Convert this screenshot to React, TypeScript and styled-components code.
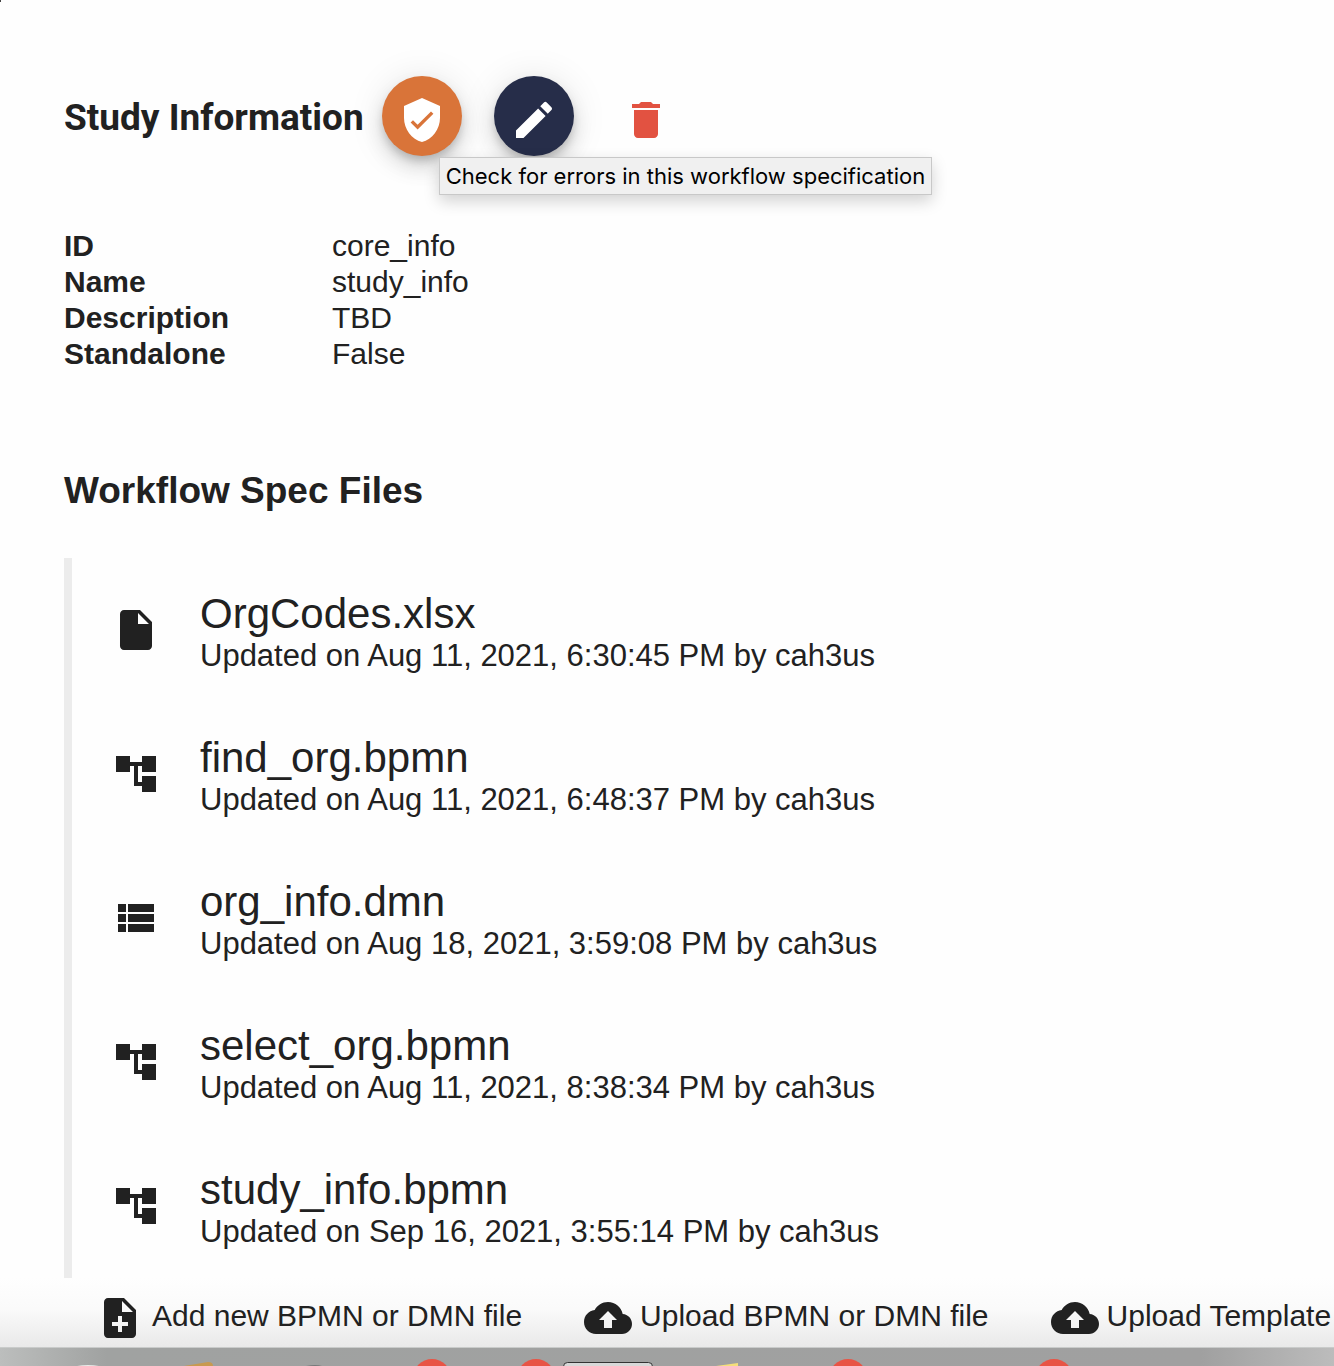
import React from "react";
import styled, { createGlobalStyle } from "styled-components";

const GlobalStyle = createGlobalStyle`
  *, *::before, *::after { box-sizing: border-box; }
  body {
    margin: 0;
    background: #fefefe;
    color: #212121;
    font-family: "Liberation Sans", Arial, sans-serif;
    font-size: 30px;
    line-height: 36px;
  }
`;

const Page = styled.div`
  position: relative;
  display: flex;
  flex-direction: column;
  min-height: 100vh;
  overflow: hidden;

  &::before {
    content: "";
    position: absolute;
    top: 0;
    left: 0;
    width: 1px;
    height: 2px;
    background: #444;
  }
`;

const Main = styled.main`
  flex: 1;
  padding: 76px 64px 0;
`;

const TitleRow = styled.header`
  display: flex;
  align-items: center;
  gap: 18px;
`;

const Title = styled.h1`
  margin: 0;
  padding-top: 4px;
  font-family: Roboto, "Liberation Sans", sans-serif;
  font-size: 37px;
  line-height: 48px;
  font-weight: 700;
  white-space: nowrap;
`;

const Actions = styled.div`
  display: flex;
  gap: 32px;
`;

const RoundButton = styled.button<{ $bg?: string; $color?: string }>`
  position: relative;
  display: flex;
  align-items: center;
  justify-content: center;
  width: 80px;
  height: 80px;
  padding: 7px 0 0;
  border: 0;
  border-radius: 50%;
  background: ${(p) => p.$bg ?? "transparent"};
  color: ${(p) => p.$color ?? "#fff"};
  box-shadow: ${(p) =>
    p.$bg
      ? "0 6px 10px -2px rgba(0,0,0,.2), 0 12px 20px rgba(0,0,0,.12), 0 2px 36px rgba(0,0,0,.1)"
      : "none"};
`;

const Tooltip = styled.span`
  position: absolute;
  z-index: 2;
  top: 81px;
  left: 57px;
  padding: 0 6px;
  border: 1px solid #c8c8c8;
  background: #f0f0f0;
  box-shadow: 0 6px 16px rgba(0, 0, 0, 0.18);
  color: #000;
  font-family: Inter, sans-serif;
  font-size: 22px;
  line-height: 36px;
  white-space: nowrap;
`;

const Glyph = styled.svg`
  flex: none;
  width: 48px;
  height: 48px;
  fill: currentColor;
`;

const Details = styled.dl`
  display: grid;
  grid-template-columns: 236px 1fr;
  column-gap: 32px;
  margin: 72px 0 0;
`;

const Term = styled.dt`
  font-weight: 700;
`;

const Value = styled.dd`
  margin: 0;
`;

const SectionTitle = styled.h2`
  margin: 95px 0 43px;
  font-size: 37px;
  line-height: 48px;
  font-weight: 700;
`;

const FileList = styled.ul`
  margin: 0;
  padding: 0;
  border-left: 8px solid #ececec;
  list-style: none;
`;

const FileRow = styled.li`
  display: flex;
  align-items: center;
  gap: 40px;
  height: 144px;
  padding-left: 40px;
`;

const FileText = styled.div`
  padding-top: 4px;
`;

const FileName = styled.div`
  font-size: 42px;
  line-height: 48px;
`;

const FileMeta = styled.div`
  font-size: 31px;
`;

const Toolbar = styled.footer`
  display: flex;
  height: 69px;
  padding: 0 65px;
  background: linear-gradient(#fefefe, #fafafa 45%, #e9e9e9);
`;

const ToolButton = styled.button`
  display: flex;
  flex: none;
  align-items: center;
  gap: 8px;
  padding: 10px 31px 0;
  border: 0;
  background: none;
  color: inherit;
  font: inherit;
  white-space: nowrap;
`;

const ToolLabel = styled.span`
  padding-bottom: 4px;
`;

const Dock = styled.div`
  height: 19px;
  overflow: hidden;
  border-top: 1px solid #c9cbca;
  background: linear-gradient(90deg, #bcbebd, #a0a2a1 8%, #a0a0a0 90%, #bcbcbc);
`;

const DockArt = styled.svg`
  display: block;
`;

const icons = {
  shield:
    "M12 1 3 5v6c0 5.55 3.84 10.74 9 12 5.16-1.26 9-6.45 9-12V5l-9-4zm-2.2 15.8-3.5-3.5 1.2-1.2 2.3 2.3 6.7-6.7 1.2 1.2-7.9 7.9z",
  edit: "M3 17.25V21h3.75L17.81 9.94l-3.75-3.75L3 17.25zM20.71 7.04c.39-.39.39-1.02 0-1.41l-2.34-2.34a.996.996 0 0 0-1.41 0l-1.83 1.83 3.75 3.75 1.83-1.83z",
  trash:
    "M6 19c0 1.1.9 2 2 2h8c1.1 0 2-.9 2-2V7H6v12zM19 4h-3.5l-1-1h-5l-1 1H5v2h14V4z",
  file: "M6 2c-1.1 0-1.99.9-1.99 2L4 20c0 1.1.89 2 1.99 2H18c1.1 0 2-.9 2-2V8l-6-6H6zm7 7V3.5L18.5 9H13z",
  tree: "M22 11V3h-7v3H9V3H2v8h7V8h2v10h4v3h7v-8h-7v3h-2V8h2v3z",
  list: "M3 14h4v-4H3v4zm0 5h4v-4H3v4zM3 9h4V5H3v4zm5 5h13v-4H8v4zm0 5h13v-4H8v4zM8 5v4h13V5H8z",
  add: "M14 2H6c-1.1 0-1.99.9-1.99 2L4 20c0 1.1.89 2 1.99 2H18c1.1 0 2-.9 2-2V8l-6-6zm2 14h-3v3h-2v-3H8v-2h3v-3h2v3h3v2zm-3-7V3.5L18.5 9H13z",
  upload:
    "M19.35 10.04C18.67 6.59 15.64 4 12 4 9.11 4 6.6 5.64 5.35 8.04 2.34 8.36 0 10.91 0 14c0 3.31 2.69 6 6 6h13c2.76 0 5-2.24 5-5 0-2.64-2.05-4.78-4.65-4.96zM14 13v4h-4v-4H7.5L12 8.5l4.5 4.5H14z",
};

type IconName = keyof typeof icons;

const Icon = ({ name }: { name: IconName }) => (
  <Glyph viewBox="0 0 24 24" aria-hidden="true">
    <path d={icons[name]} />
  </Glyph>
);

const details = [
  ["ID", "core_info"],
  ["Name", "study_info"],
  ["Description", "TBD"],
  ["Standalone", "False"],
];

const files: { icon: IconName; name: string; updated: string }[] = [
  { icon: "file", name: "OrgCodes.xlsx", updated: "Aug 11, 2021, 6:30:45 PM" },
  { icon: "tree", name: "find_org.bpmn", updated: "Aug 11, 2021, 6:48:37 PM" },
  { icon: "list", name: "org_info.dmn", updated: "Aug 18, 2021, 3:59:08 PM" },
  { icon: "tree", name: "select_org.bpmn", updated: "Aug 11, 2021, 8:38:34 PM" },
  { icon: "tree", name: "study_info.bpmn", updated: "Sep 16, 2021, 3:55:14 PM" },
];

const tools: { icon: IconName; label: string }[] = [
  { icon: "add", label: "Add new BPMN or DMN file" },
  { icon: "upload", label: "Upload BPMN or DMN file" },
  { icon: "upload", label: "Upload Template" },
];

const badges = [432, 536, 848, 1054];

export default function App() {
  return (
    <>
      <GlobalStyle />
      <Page>
        <Main>
          <TitleRow>
            <Title>Study Information</Title>
            <Actions>
              <RoundButton $bg="#d97439" aria-label="Validate" aria-describedby="validate-tip">
                <Icon name="shield" />
                <Tooltip id="validate-tip" role="tooltip">
                  Check for errors in this workflow specification
                </Tooltip>
              </RoundButton>
              <RoundButton $bg="#262d49" aria-label="Edit">
                <Icon name="edit" />
              </RoundButton>
              <RoundButton $color="#e25241" aria-label="Delete">
                <Icon name="trash" />
              </RoundButton>
            </Actions>
          </TitleRow>

          <Details>
            {details.map(([term, value]) => (
              <React.Fragment key={term}>
                <Term>{term}</Term>
                <Value>{value}</Value>
              </React.Fragment>
            ))}
          </Details>

          <SectionTitle>Workflow Spec Files</SectionTitle>
          <FileList>
            {files.map((f) => (
              <FileRow key={f.name}>
                <Icon name={f.icon} />
                <FileText>
                  <FileName>{f.name}</FileName>
                  <FileMeta>Updated on {f.updated} by cah3us</FileMeta>
                </FileText>
              </FileRow>
            ))}
          </FileList>
        </Main>
        <Toolbar>
          {tools.map((t) => (
            <ToolButton key={t.label}>
              <Icon name={t.icon} />
              <ToolLabel>{t.label}</ToolLabel>
            </ToolButton>
          ))}
        </Toolbar>
        <Dock aria-hidden="true">
          <DockArt width="1334" height="18" viewBox="0 0 1334 18">
            <ellipse cx="88" cy="22" rx="18" ry="5" fill="#e8eae8" />
            <path d="M184 18 L208 14 Q213 14 213 18Z" fill="#c89a50" />
            <path d="M306 18 Q316 16 322 18Z" fill="#77797a" />
            <rect x="563.5" y="14.5" width="89" height="12" rx="4" fill="#d8d8d8" stroke="#333" />
            <path d="M716 18 L738 15 V18Z" fill="#f5df7a" />
            {badges.map((x) => (
              <circle key={x} cx={x} cy="30" r="19" fill="#e85445" />
            ))}
          </DockArt>
        </Dock>
      </Page>
    </>
  );
}
